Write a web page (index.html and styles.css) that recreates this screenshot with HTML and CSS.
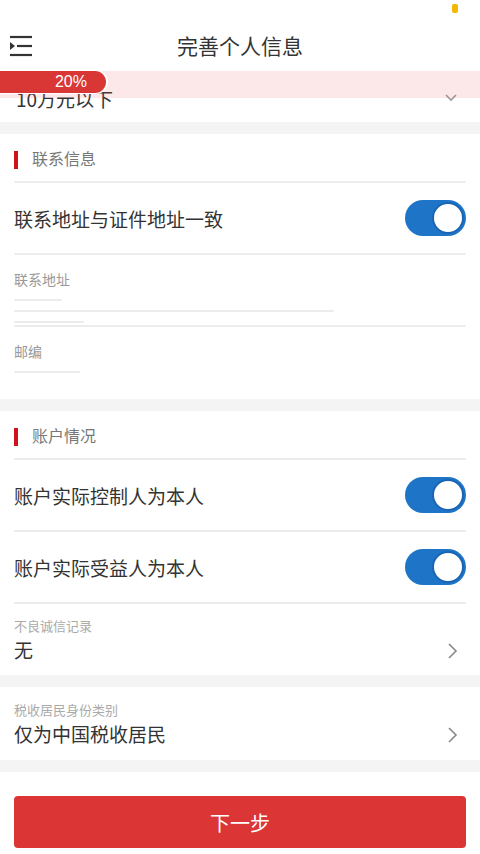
FILE: index.html
```html
<!DOCTYPE html>
<html lang="zh-CN">
<head>
    <meta charset="UTF-8">
    <meta name="viewport" content="width=device-width, initial-scale=1.0">
    <title>完善个人信息</title>
    <link rel="stylesheet" href="styles.css">
</head>
<body>
    <div class="page">
        <header class="header">
            <div class="status"><span class="status-dot"></span></div>
            <div class="titlebar">
                <svg class="menu-icon" width="24" height="22" viewBox="0 0 24 22">
                    <line x1="1" y1="2" x2="23" y2="2" stroke="#333" stroke-width="2.2"/>
                    <line x1="8" y1="11" x2="23" y2="11" stroke="#333" stroke-width="2.2"/>
                    <line x1="1" y1="20" x2="23" y2="20" stroke="#333" stroke-width="2.2"/>
                    <polygon points="1,7 6,11 1,15" fill="#333"/>
                </svg>
                <h1 class="title">完善个人信息</h1>
            </div>
        </header>

        <div class="progress">
            <div class="progress-fill">20%</div>
        </div>

        <div class="field-top">
            <span class="value">10万元以下</span>
            <svg width="12" height="8" viewBox="0 0 12 8"><polyline points="1,1 6,6 11,1" fill="none" stroke="#999" stroke-width="1.6"/></svg>
        </div>

        <div class="band"></div>

        <div class="section-head"><span class="mark"></span>联系信息</div>
        <div class="row switch-row">
            <span>联系地址与证件地址一致</span>
            <span class="switch"><span class="knob"></span></span>
        </div>
        <div class="row field">
            <div class="label">联系地址</div>
            <div class="blur">
                <span class="smear" style="width: 48px"></span>
                <span class="smear" style="width: 320px"></span>
                <span class="smear" style="width: 70px"></span>
            </div>
        </div>
        <div class="row field last">
            <div class="label">邮编</div>
            <div class="blur">
                <span class="smear" style="width: 66px"></span>
            </div>
        </div>

        <div class="band"></div>

        <div class="section-head"><span class="mark"></span>账户情况</div>
        <div class="row switch-row">
            <span>账户实际控制人为本人</span>
            <span class="switch"><span class="knob"></span></span>
        </div>
        <div class="row switch-row">
            <span>账户实际受益人为本人</span>
            <span class="switch"><span class="knob"></span></span>
        </div>
        <div class="row select last">
            <div>
                <div class="label">不良诚信记录</div>
                <div class="value">无</div>
            </div>
            <svg class="chevron" width="10" height="16" viewBox="0 0 10 16"><polyline points="1,1 8,8 1,15" fill="none" stroke="#888" stroke-width="1.6"/></svg>
        </div>

        <div class="band"></div>

        <div class="row select last tall">
            <div>
                <div class="label">税收居民身份类别</div>
                <div class="value">仅为中国税收居民</div>
            </div>
            <svg class="chevron" width="10" height="16" viewBox="0 0 10 16"><polyline points="1,1 8,8 1,15" fill="none" stroke="#888" stroke-width="1.6"/></svg>
        </div>

        <div class="band"></div>

        <div class="footer">
            <button class="next">下一步</button>
        </div>
    </div>
</body>
</html>
```

FILE: styles.css
```css
body { margin: 0; background: #fff; font-family: "Noto Sans CJK SC", "Noto Sans", sans-serif; color: #333; }
.page { position: relative; width: 480px; height: 854px; overflow: hidden; }

.header { height: 71px; background: #fff; position: relative; z-index: 1; }
.status { height: 18px; display: flex; justify-content: flex-end; padding-right: 22px; }
.status-dot { width: 6px; height: 9px; margin-top: 4px; border-radius: 2px; background: #f5b800; }
.titlebar { height: 53px; display: flex; align-items: center; justify-content: center; position: relative; }
.menu-icon { position: absolute; left: 9px; top: 17px; }
.title { margin: 0; font-size: 21px; font-weight: normal; color: #333; }

.progress { position: absolute; top: 71px; left: 0; width: 480px; height: 27px; background: rgba(236, 90, 90, 0.14); z-index: 2; }
.progress-fill { width: 106px; height: 22px; box-sizing: border-box; padding-right: 19px; background: #d93636; border-radius: 0 12px 12px 0; box-shadow: 1px 0 0 1px #fff; color: #fff; font-family: "Liberation Sans", Arial, sans-serif; font-size: 16px; line-height: 22px; text-align: right; }

.field-top { height: 51px; box-sizing: border-box; padding: 3px 23px 0 16px; display: flex; align-items: center; justify-content: space-between; }
.field-top .value { font-size: 19px; }

.band { height: 12px; background: #f4f4f4; }

.section-head { height: 47px; margin: 0 14px; border-bottom: 2px solid #ececec; display: flex; align-items: center; font-size: 16px; color: #777; }
.mark { width: 4px; height: 18px; margin-right: 14px; margin-top: 4px; background: #d0101b; }

.row { margin: 0 14px; border-bottom: 2px solid #ececec; box-sizing: border-box; }
.row.last { border-bottom: none; }

.switch-row { height: 72px; display: flex; align-items: center; justify-content: space-between; font-size: 19px; }
.switch { width: 61px; height: 36px; box-sizing: border-box; border-radius: 18px; background: #1e74c6; display: flex; align-items: center; justify-content: flex-end; padding-right: 2px; }
.knob { width: 32px; height: 32px; box-sizing: border-box; border-radius: 50%; background: #fff; border: 2px solid #1a66b4; }

.field { height: 72px; padding-top: 14px; }
.field .label { font-size: 14px; line-height: 20px; color: #999; }
.blur { display: flex; flex-direction: column; gap: 9px; margin-top: 10px; }
.smear { height: 2px; background: #ececec; border-radius: 1px; }

.select { height: 71px; display: flex; align-items: center; justify-content: space-between; padding-right: 8px; }
.select.tall { height: 73px; }
.select .label { font-size: 13px; line-height: 20px; color: #aaa; }
.select .value { font-size: 19px; line-height: 28px; color: #333; }
.chevron { margin-top: 22px; }

.footer { padding: 24px 14px 0; }
.next { width: 452px; height: 52px; border: none; border-radius: 4px; background: #dc3535; color: #fff; font-family: "Noto Sans CJK SC", sans-serif; font-size: 20px; cursor: pointer; }
```
